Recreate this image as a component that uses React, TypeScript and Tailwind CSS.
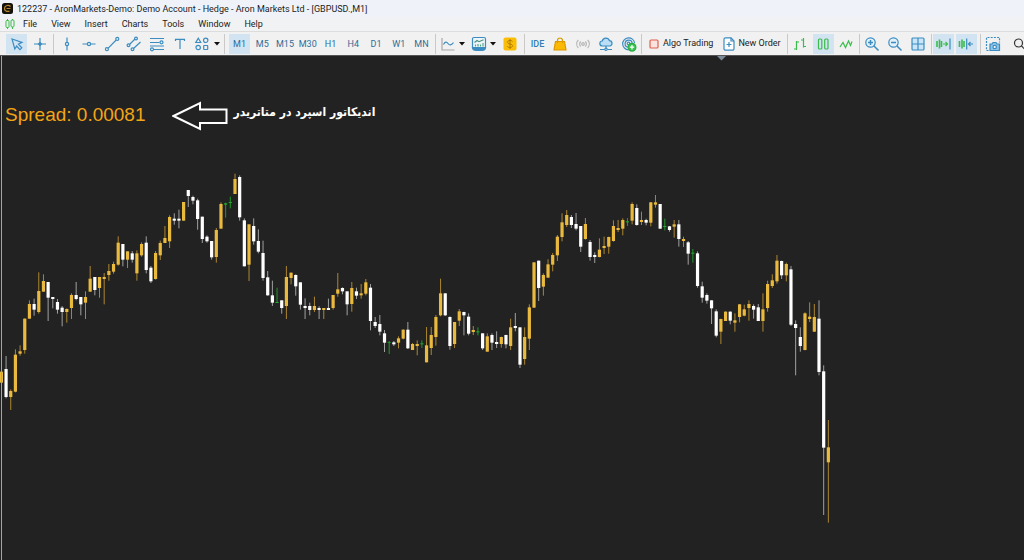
import type { ReactNode } from 'react';

type Kind = 'up' | 'down' | 'doji';
// kind, high, body top, body bottom, low
type Candle = [Kind, number, number, number, number];

const U = 'up';
const D = 'down';
const J = 'doji';

// Values are thirds of a pixel, measured down from the base of each session
const SESSIONS: { base: number; candles: Candle[] }[] = [
  {
    base: 495,
    candles: [
      [U, 617, 620, 653, 653], [D, 573, 612, 696, 700], [U, 673, 678, 696, 735], [U, 553, 569, 680, 682],
      [U, 541, 559, 566, 572], [U, 460, 461, 555, 566], [U, 406, 417, 461, 461], [D, 401, 417, 434, 452],
      [U, 322, 378, 441, 446], [U, 328, 348, 380, 380], [D, 351, 351, 398, 468], [D, 396, 396, 402, 430],
      [D, 402, 411, 434, 446], [D, 423, 428, 441, 484], [U, 430, 432, 441, 473], [U, 385, 390, 429, 462],
      [D, 351, 390, 402, 406], [D, 396, 396, 418, 451], [U, 379, 396, 413, 462], [U, 303, 341, 380, 380],
      [D, 336, 336, 375, 391], [U, 336, 336, 369, 398], [U, 324, 336, 342, 418], [U, 297, 318, 330, 347],
      [U, 290, 297, 320, 326], [U, 214, 233, 299, 302], [D, 237, 237, 284, 304], [U, 259, 259, 284, 309],
      [D, 258, 265, 284, 293], [U, 256, 265, 325, 347], [U, 232, 237, 271, 275], [D, 214, 233, 315, 325],
      [D, 303, 308, 349, 354], [U, 258, 264, 342, 344], [U, 227, 234, 271, 285], [U, 183, 219, 234, 234],
      [U, 151, 156, 229, 249], [D, 145, 161, 167, 179], [D, 134, 161, 167, 190], [U, 111, 111, 167, 167],
      [D, 75, 75, 93, 126], [D, 92, 96, 107, 118], [D, 101, 106, 162, 194], [D, 155, 155, 222, 234],
      [D, 211, 215, 229, 233], [D, 228, 228, 277, 284], [U, 189, 195, 276, 293], [U, 112, 117, 191, 191],
      [J, 113, 115, 119, 158], [J, 95, 111, 114, 130], [U, 26, 42, 87, 87], [D, 31, 36, 157, 167],
      [D, 160, 166, 304, 304], [U, 178, 178, 299, 348], [D, 160, 183, 229, 239], [D, 193, 228, 260, 265],
      [D, 227, 264, 339, 347], [D, 318, 337, 391, 392], [D, 347, 391, 413, 423], [J, 368, 411, 414, 414],
      [D, 406, 406, 429, 446], [U, 303, 336, 423, 462], [U, 323, 323, 339, 358],
    ],
  },
  {
    base: 780,
    candles: [
      [D, 43, 45, 79, 107], [D, 67, 67, 134, 149], [D, 115, 138, 144, 177], [D, 128, 138, 150, 166],
      [U, 110, 138, 150, 156], [D, 139, 144, 150, 177], [U, 144, 144, 150, 177], [D, 116, 144, 150, 150],
      [U, 105, 105, 144, 149], [U, 39, 88, 101, 110], [D, 82, 84, 94, 103], [D, 94, 94, 133, 166],
      [U, 66, 84, 132, 155], [D, 83, 94, 107, 117], [U, 72, 100, 106, 116], [U, 57, 67, 101, 106],
      [D, 72, 83, 183, 211], [D, 171, 186, 198, 204], [D, 165, 192, 215, 226], [D, 210, 220, 248, 276],
      [J, 243, 246, 248, 282], [D, 243, 247, 253, 258], [U, 229, 235, 248, 265], [U, 208, 209, 236, 238],
      [D, 186, 209, 265, 267], [U, 249, 252, 270, 270], [U, 241, 252, 258, 286], [J, 241, 250, 253, 264],
    ],
  },
  {
    base: 600,
    candles: [
      [U, 381, 436, 487, 487], [U, 381, 405, 444, 465], [U, 345, 351, 411, 437], [U, 236, 280, 346, 349],
      [D, 280, 280, 346, 348], [D, 349, 351, 438, 449], [U, 366, 366, 432, 444], [U, 327, 334, 362, 378],
      [D, 335, 336, 346, 406], [D, 340, 350, 401, 406], [U, 378, 390, 396, 405], [J, 382, 394, 397, 406],
      [D, 400, 400, 445, 450], [U, 400, 409, 455, 455], [D, 400, 405, 428, 450], [D, 394, 426, 432, 444],
      [U, 410, 411, 432, 443], [D, 404, 405, 433, 445], [U, 356, 382, 438, 450], [D, 339, 378, 384, 394],
      [D, 382, 382, 494, 504], [U, 382, 411, 477, 494], [U, 313, 322, 416, 450], [U, 187, 187, 323, 323],
      [D, 182, 182, 264, 303], [U, 220, 225, 260, 287], [U, 178, 193, 233, 233], [U, 159, 165, 194, 214],
      [U, 105, 110, 166, 183], [U, 40, 67, 111, 124], [U, 30, 45, 75, 81], [D, 45, 51, 75, 84],
    ],
  },
  {
    base: 555,
    candles: [
      [D, 84, 117, 131, 136], [D, 123, 123, 185, 201], [U, 99, 117, 162, 164], [D, 165, 171, 216, 227],
      [D, 202, 210, 216, 234], [U, 160, 194, 216, 217], [U, 155, 183, 189, 207], [U, 155, 156, 185, 206],
      [U, 106, 123, 168, 170], [U, 105, 129, 135, 141], [U, 100, 105, 131, 151], [J, 99, 109, 112, 123],
      [U, 52, 57, 107, 118], [D, 58, 69, 120, 122], [U, 80, 105, 111, 120], [D, 101, 105, 113, 121],
      [U, 51, 52, 113, 124], [U, 30, 52, 59, 68], [D, 57, 57, 131, 132], [J, 101, 123, 126, 136],
      [D, 123, 124, 135, 140], [U, 105, 118, 125, 158], [D, 105, 118, 162, 185], [U, 155, 162, 168, 186],
      [D, 168, 172, 206, 239], [J, 192, 203, 206, 233], [D, 199, 205, 303, 308], [D, 290, 304, 338, 353],
      [D, 325, 330, 347, 356], [D, 346, 346, 370, 417],
    ],
  },
  {
    base: 720,
    candles: [
      [D, 208, 214, 287, 292], [U, 236, 237, 275, 312], [U, 214, 215, 243, 243], [D, 214, 215, 242, 253],
      [U, 220, 241, 248, 275], [U, 192, 193, 231, 247], [U, 194, 208, 227, 229], [U, 181, 192, 204, 242],
      [D, 193, 198, 209, 236], [D, 192, 202, 243, 243], [U, 160, 208, 243, 275], [U, 122, 132, 204, 215],
      [U, 103, 121, 138, 144], [U, 45, 62, 124, 131], [D, 62, 63, 106, 117], [U, 68, 72, 106, 124],
      [D, 78, 88, 254, 258], [D, 241, 252, 264, 406], [D, 262, 291, 318, 335], [U, 217, 220, 330, 331],
      [U, 187, 230, 237, 246], [U, 192, 231, 275, 276], [D, 181, 236, 396, 406], [D, 376, 394, 623, 825],
      [U, 540, 622, 667, 848],
    ],
  },
];

const CANDLES = SESSIONS.flatMap(({ base, candles }) =>
  candles.map(([kind, ...ys]) => ({ kind, ys: ys.map((y) => (base + y) / 3 - 56) })),
);

const BODY = { up: '#eaba3f', down: '#ffffff', doji: '#1fae2c' };
const WICK = { up: '#ad8630', down: '#a0a0a0', doji: '#1f9a2a' };

const MENU = ['File', 'View', 'Insert', 'Charts', 'Tools', 'Window', 'Help'];
const TIMEFRAMES = ['M1', 'M5', 'M15', 'M30', 'H1', 'H4', 'D1', 'W1', 'MN'];

function Icon({ children, color = '#3b8cc0' }: { children: ReactNode; color?: string }) {
  return (
    <svg
      viewBox="0 0 16 16"
      className="w-4 h-4 shrink-0"
      fill="none"
      stroke={color}
      strokeWidth="1.2"
      aria-hidden="true"
    >
      {children}
    </svg>
  );
}

function Tool({ label, active, children }: { label: string; active?: boolean; children: ReactNode }) {
  return (
    <button
      aria-label={label}
      className={`flex h-5 w-[21px] shrink-0 items-center justify-center ${active ? 'bg-[#d2e3f2]' : ''}`}
    >
      {children}
    </button>
  );
}

function Caret({ label }: { label: string }) {
  return (
    <button aria-label={label} className="flex h-5 w-[7px] shrink-0 items-center justify-center">
      <svg viewBox="0 0 6 4" className="w-[6px] h-1 shrink-0" aria-hidden="true">
        <path d="M0 0h6L3 3.6z" fill="#111" />
      </svg>
    </button>
  );
}

function Sep() {
  return <div className="h-5 w-px shrink-0 bg-[#c9c9c9]" />;
}

function Toolbar() {
  return (
    <div className="flex h-6 items-center overflow-hidden border-t border-[#dcdcdc] bg-[#f1f1f1] pl-[6px]">
      <div className="flex w-[44px] shrink-0 justify-between">
        <Tool label="Cursor" active>
          <Icon>
            <path d="M3 3l10 3.4-3.6 1.8 3.4 3.6-1.8 1.8-3.4-3.6L5.8 13z" />
          </Icon>
        </Tool>
        <Tool label="Crosshair">
          <Icon>
            <path d="M8 2v12M2 8h12" />
            <path d="M6.5 8L8 6.5 9.5 8 8 9.5z" fill="#3b8cc0" />
          </Icon>
        </Tool>
      </div>
      <div className="ml-[3px] mr-[2px] flex">
        <Sep />
      </div>
      <div className="flex w-[157px] shrink-0 justify-between">
        <Tool label="Vertical line">
          <Icon>
            <path d="M8 1.5v4.8M8 9.7v4.8" />
            <circle cx="8" cy="8" r="1.6" />
          </Icon>
        </Tool>
        <Tool label="Horizontal line">
          <Icon>
            <path d="M1.5 8h4.8M9.7 8h4.8" />
            <circle cx="8" cy="8" r="1.6" />
          </Icon>
        </Tool>
        <Tool label="Trend line">
          <Icon>
            <path d="M4 12.3L12.2 4" />
            <circle cx="2.9" cy="13.2" r="1.5" />
            <circle cx="13.3" cy="2.9" r="1.5" />
          </Icon>
        </Tool>
        <Tool label="Channel">
          <Icon>
            <path d="M3.5 8.5L9 3M7.5 12.5L14.5 6" />
            <circle cx="2.5" cy="9.3" r="1.4" />
            <circle cx="10" cy="2.5" r="1.4" />
            <circle cx="6.5" cy="13.3" r="1.4" />
          </Icon>
        </Tool>
        <Tool label="Fibonacci">
          <Icon>
            <path d="M1 2.5h14M1 6.5h9.5M1 10h14M5 13.5h10" />
            <circle cx="12.5" cy="6.3" r="1.5" />
            <circle cx="3" cy="13.3" r="1.5" />
          </Icon>
        </Tool>
        <Tool label="Text">
          <Icon>
            <path d="M3.5 5V3.3h9V5M8 3.3v9.7" />
          </Icon>
        </Tool>
        <Tool label="Shapes">
          <Icon>
            <path d="M4.3 2.2L6.8 6.5H1.8z" />
            <circle cx="11.7" cy="4.3" r="2.2" />
            <circle cx="4.2" cy="11.5" r="2.2" />
            <rect x="9.7" y="9.5" width="4" height="4" rx="0.5" />
          </Icon>
        </Tool>
      </div>
      <Caret label="More shapes" />
      <div className="ml-1 mr-1 flex">
        <Sep />
      </div>
      <div className="flex w-[203px] shrink-0 justify-between text-[9px] leading-5 text-[#2f6c98]">
        {TIMEFRAMES.map((tf) => (
          <button
            key={tf}
            className={`flex h-5 w-[21px] items-center justify-center ${tf === 'M1' ? 'bg-[#d2e3f2]' : ''}`}
          >
            {tf}
          </button>
        ))}
      </div>
      <div className="ml-[3px] mr-px flex">
        <Sep />
      </div>
      <div className="flex shrink-0 items-center">
        <Tool label="Chart type">
          <Icon>
            <path d="M2 2v12h12.5" stroke="#a9a9a9" />
            <path d="M3.5 8.5C5 5.5 6.5 5.5 8 7.5s3 2 5.5-.8" />
          </Icon>
        </Tool>
        <Caret label="Chart type menu" />
        <div className="w-[3px]" />
        <Tool label="Indicators">
          <Icon>
            <path d="M1.5 11.5V3a1.5 1.5 0 0 1 1.5-1.5h10A1.5 1.5 0 0 1 14.5 3v8.5z" fill="#eef6fa" />
            <path d="M1.5 11.5h13c0 2-1.5 3-4 3h-5c-2.5 0-4-1-4-3z" fill="#3b8cc0" />
            <path d="M3.5 6.5l2.5-2 2 1.2 4.5-2" stroke="#4a8f7c" />
            <path d="M4.5 10.5v-2M7 10.5V8M9.5 10.5v-2M12 10.5V7" stroke="#58a68a" />
          </Icon>
        </Tool>
        <Caret label="Indicators menu" />
        <div className="w-[3px]" />
        <Tool label="Market">
          <svg viewBox="0 0 16 16" className="h-4 w-4" aria-hidden="true">
            <rect x="1.5" y="1.5" width="13" height="13" rx="2" fill="#fabe06" />
            <path
              d="M10.5 5.5C10 4.7 9 4.5 8 4.5c-3.3 0-3.3 3.2 0 3.5 3.3.3 3.3 3.5 0 3.5-1.2 0-2.2-.3-2.7-1.2M8 3v10"
              fill="none"
              stroke="#b07c00"
            />
          </svg>
        </Tool>
      </div>
      <div className="ml-1 mr-[2px] flex">
        <Sep />
      </div>
      <div className="flex w-[112px] shrink-0 justify-between text-[9px] leading-5">
        <button className="flex h-5 w-[21px] items-center justify-center font-medium text-[#2f7eb5]">IDE</button>
        <Tool label="Store">
          <Icon color="#d99a00">
            <path d="M3.5 5.5h9l1.5 8.5H2z" fill="#fbb904" />
            <path d="M5.5 7V4.5a2.5 2.5 0 0 1 5 0V7" />
          </Icon>
        </Tool>
        <Tool label="Signals">
          <Icon color="#b5b5b5">
            <circle cx="8" cy="8" r="1.3" />
            <path d="M5.7 5.5a3.5 3.5 0 0 0 0 5M10.3 5.5a3.5 3.5 0 0 1 0 5M3.3 4a6 6 0 0 0 0 8M12.7 4a6 6 0 0 1 0 8" />
          </Icon>
        </Tool>
        <Tool label="Cloud">
          <Icon>
            <path d="M4.5 10a2.5 2.5 0 0 1-.3-5A3.8 3.8 0 0 1 11.5 4.7a2.7 2.7 0 0 1 .5 5.3z" fill="#b9def5" />
            <path d="M8 10v2.5M2 13.5h4.5M9.5 13.5H14" />
            <circle cx="8" cy="13.3" r="1.2" />
          </Icon>
        </Tool>
        <Tool label="Virtual hosting">
          <Icon>
            <path d="M7.5 13.8A6 6 0 1 1 13.6 7M7 11.2A3.6 3.6 0 1 1 11.2 7" />
            <circle cx="7.5" cy="7.5" r="1.3" />
            <circle cx="11" cy="11.2" r="3.9" fill="#35c24d" stroke="#2bac43" />
            <path d="M11 9v4.4M8.8 11.2h4.4" stroke="#fff" />
          </Icon>
        </Tool>
      </div>
      <div className="ml-[2px] mr-1 flex">
        <Sep />
      </div>
      <button className="flex h-5 shrink-0 items-center gap-px whitespace-nowrap text-[9px] text-[#222]">
        <Icon color="#e0604f">
          <rect x="4" y="4" width="8" height="8" rx="1" fill="#fae3df" />
        </Icon>
        Algo Trading
      </button>
      <button className="ml-2 flex h-5 shrink-0 items-center gap-px whitespace-nowrap text-[9px] text-[#222]">
        <Icon>
          <path
            d="M10 1.8H4.5a1.5 1.5 0 0 0-1.5 1.5v9.4a1.5 1.5 0 0 0 1.5 1.5h7a1.5 1.5 0 0 0 1.5-1.5V5z"
            fill="#fff"
          />
          <path d="M10 1.8V5h3" />
          <path d="M8 6v5M5.5 8.5h5" />
        </Icon>
        New Order
      </button>
      <div className="ml-[6px] mr-[2px] flex">
        <Sep />
      </div>
      <div className="flex w-[67px] shrink-0 justify-between">
        <Tool label="Bar chart">
          <Icon color="#3dbb4c">
            <path d="M4.5 5v9M2 13h2.5M4.5 6H7M11.5 2v9.5M9 4h2.5M11.5 10.5H14" />
          </Icon>
        </Tool>
        <Tool label="Candlesticks" active>
          <Icon color="#3dbb4c">
            <rect x="3.5" y="3" width="3.3" height="10" rx="1" />
            <rect x="9.7" y="3" width="3.3" height="10" rx="1" />
          </Icon>
        </Tool>
        <Tool label="Line chart">
          <Icon color="#3dbb4c">
            <path d="M2 11l3-4.5 2.5 5L10.5 5l2 4.5L14 5.5" />
          </Icon>
        </Tool>
      </div>
      <div className="ml-[2px] mr-[2px] flex">
        <Sep />
      </div>
      <div className="flex w-[67px] shrink-0 justify-between">
        <Tool label="Zoom in">
          <Icon>
            <circle cx="6.5" cy="6.5" r="4.7" fill="#e2f0fa" />
            <path d="M10 10l4.5 4.5M6.5 4v5M4 6.5h5" strokeWidth="1.5" />
          </Icon>
        </Tool>
        <Tool label="Zoom out">
          <Icon>
            <circle cx="6.5" cy="6.5" r="4.7" fill="#e2f0fa" />
            <path d="M10 10l4.5 4.5M4 6.5h5" strokeWidth="1.5" />
          </Icon>
        </Tool>
        <Tool label="Tile windows">
          <Icon>
            <rect x="2" y="2" width="12" height="12" rx="1" fill="#cbe5f8" />
            <path d="M8 2v12M2 8h12" />
          </Icon>
        </Tool>
      </div>
      <div className="ml-[2px] mr-px flex">
        <Sep />
      </div>
      <div className="flex w-[44px] shrink-0 justify-between">
        <Tool label="Auto scroll" active>
          <Icon color="#3dbb4c">
            <path d="M2 5v6M4.5 3.5v9M6.5 5v6" strokeWidth="1.6" />
            <path d="M8 8h4.5M10.5 6l2 2-2 2" />
            <path d="M15 2.5v11" stroke="#3b8cc0" />
          </Icon>
        </Tool>
        <Tool label="Chart shift" active>
          <Icon color="#3dbb4c">
            <path d="M1.5 5v6M4 3.5v9M6 5v6" strokeWidth="1.6" />
            <path d="M8.7 2.5v11M15 8h-4.5M12.5 6l-2 2 2 2" stroke="#3b8cc0" />
          </Icon>
        </Tool>
      </div>
      <div className="ml-[3px] mr-[2px] flex">
        <Sep />
      </div>
      <Tool label="Screenshot">
        <Icon>
          <path d="M3.5 14.5h-2v-13h13v5" strokeDasharray="2 1.2" />
          <path d="M5 8h2l1-1.5h3L12 8h2.5v6.5H5z" fill="#8cc4ea" />
          <circle cx="9.7" cy="11" r="1.7" fill="#fff" />
        </Icon>
      </Tool>
      <div className="w-[5px] shrink-0" />
      <Tool label="Search">
        <Icon color="#333">
          <circle cx="7.5" cy="7" r="4" />
          <path d="M10.5 10l3.5 3.5" />
        </Icon>
      </Tool>
    </div>
  );
}

function CandleChart() {
  return (
    <svg className="absolute left-0 top-0 h-full w-full" role="img" aria-label="GBPUSD M1">
      <path d="M717 0h9l-4.5 4.5z" fill="#7a8a98" />
      {CANDLES.map(({ kind, ys: [high, top, bottom, low] }, i) => {
        const x = 1.4 + i * 4.672;
        return (
          <g key={i}>
            <rect x={x - 0.5} y={high} width={1} height={low - high} fill={WICK[kind]} />
            <rect x={x - 1.6} y={top} width={3.2} height={bottom - top} fill={BODY[kind]} />
          </g>
        );
      })}
    </svg>
  );
}

export default function App() {
  return (
    <div className="flex min-h-screen flex-col overflow-hidden bg-[#222222] font-[Roboto,'Noto_Sans',sans-serif]">
      {/* Title bar */}
      <header className="flex h-[17px] items-center gap-1 bg-[#eff3f9] pl-[2px] text-[9px] leading-4 text-[#1c1c1c]">
        <svg viewBox="0 0 11 11" className="h-[11px] w-[11px]" aria-hidden="true">
          <rect width="11" height="11" rx="2.5" fill="#15120c" />
          <path
            d="M8.5 3.5C7 1.8 3 2 2.5 5.2c-.3 2.5 2.5 4 5 2.8M4.5 5.5h4"
            fill="none"
            stroke="#b98a2c"
            strokeWidth="1.2"
          />
        </svg>
        <h1 className="whitespace-nowrap">
          122237 - AronMarkets-Demo: Demo Account - Hedge - Aron Markets Ltd - [GBPUSD.,M1]
        </h1>
      </header>

      {/* Menu */}
      <nav className="flex h-[14px] items-center bg-[#f1f2f4] pl-[5px] text-[9px] leading-[14px] text-[#222]">
        <svg viewBox="0 0 10 10" className="mr-2 h-[10px] w-[10px]" fill="none" stroke="#3dbb4c" aria-hidden="true">
          <path d="M2.5 0v1.5M2.5 8.5V10M7.5 0v1M7.5 8V10" />
          <rect x="1" y="1.5" width="3" height="7" rx="1" />
          <rect x="6" y="1" width="3" height="7" rx="1" />
        </svg>
        <div className="flex gap-[14px]">
          {MENU.map((item) => (
            <button key={item}>{item}</button>
          ))}
        </div>
      </nav>

      <Toolbar />

      {/* Chart */}
      <main className="relative flex-1 border-t border-[#555]">
        <CandleChart />
        <div className="relative flex items-center border-l border-transparent pl-1 pt-11">
          <p className="whitespace-nowrap pb-[2px] font-['Liberation_Sans',sans-serif] text-[19px] leading-6 text-[#f2a516]">
            Spread: 0.00081
          </p>
          <svg viewBox="0 0 56 30" className="ml-[26px] h-[30px] w-14" aria-hidden="true">
            <path d="M1.5 15L28 2v6.5h26.5V22H28v6z" fill="none" stroke="#fff" strokeWidth="2" />
          </svg>
          <p
            dir="rtl"
            lang="fa"
            className="ml-[6px] whitespace-nowrap pb-2 font-['DejaVu_Sans_Condensed','DejaVu_Sans',sans-serif] text-[12px] font-bold leading-6 text-white"
          >
            اندیکاتور اسپرد در متاتریدر
          </p>
        </div>
        <div className="absolute left-px top-0 h-full w-px bg-[#a5a5a5]" />
      </main>
    </div>
  );
}
